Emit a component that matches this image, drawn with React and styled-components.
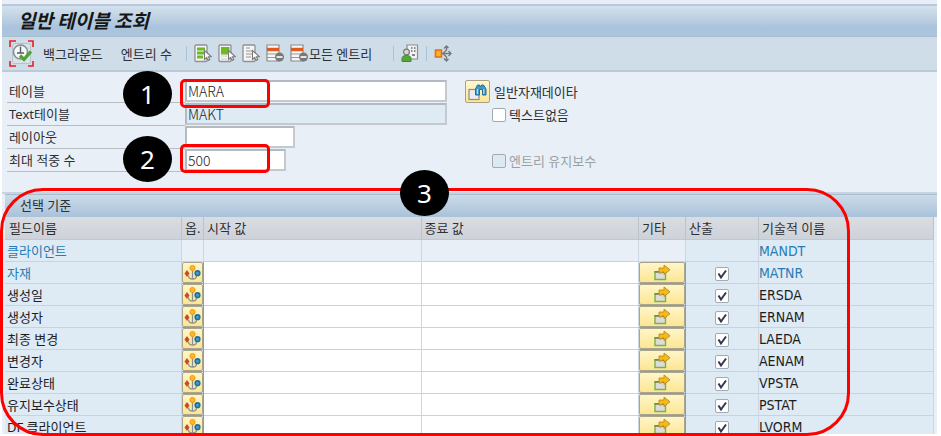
import React from "react";
import styled, { createGlobalStyle } from "styled-components";

const Global = createGlobalStyle`
  * { box-sizing: border-box; }
  body {
    margin: 0;
    min-height: 100vh;
    background: #fff;
    color: #2d2f33;
    font: 13px/20px "Noto Sans", "Noto Sans CJK KR", sans-serif;
  }
  button, input { font: inherit; color: inherit; }
`;

const Screen = styled.main`
  display: flex;
  flex-direction: column;
  height: calc(100vh - 2px);
  min-height: 400px;
  margin: 0 4px 0 2px;
  padding-top: 4px;
  background: #e8eff6;
`;

const TitleBar = styled.header`
  height: 33px;
  padding-left: 16px;
  border-top: 2px solid #bcc8da;
  border-bottom: 1px solid #a6bdd2;
  background: linear-gradient(#d2e1ee, #c1d3e2 35%, #abc4de 70%, #abc5dd);
`;

const Title = styled.h1`
  margin: 0;
  font: italic 700 19px/28px "Noto Sans CJK KR", sans-serif;
  color: #161616;
`;

const Toolbar = styled.div`
  display: flex;
  align-items: center;
  height: 35px;
  padding-left: 7px;
  background: #cfdde8;
  border-bottom: 2px solid #b9cad8;
`;

const ToolButton = styled.button`
  display: flex;
  align-items: center;
  height: 28px;
  padding: 0;
  margin-right: ${(p) => p.$after || 0}px;
  border: 0;
  background: none;
  white-space: nowrap;
`;

const Separator = styled.span`
  width: 1px;
  height: 15px;
  margin-right: 7px;
  background: #a9c3da;
`;

const Form = styled.form`
  display: flex;
  flex-direction: column;
  padding: 8px 0 20px 5px;
`;

const FormRow = styled.div`
  position: relative;
  display: grid;
  grid-template-columns: 178px 262px 1fr;
  height: 23px;
`;

const FieldLabel = styled.label`
  padding-left: 2px;
  line-height: 22px;
  border-bottom: 1px solid #b9bdc2;
`;

const TextField = styled.input`
  width: ${(p) => p.$width || "100%"};
  height: 22px;
  padding: 0 1px 1px;
  border: 2px solid #b3bac1;
  border-right-color: #c3c9cf;
  border-bottom-color: #c3c9cf;
  border-radius: 0;
  background: #fff;
  outline: 0;
  font: 300 14px/17px "Noto Sans CJK KR", sans-serif;
  color: #222;
  &:read-only { background: #deeaf4; }
`;

const Aside = styled.div`
  display: flex;
  align-items: center;
  gap: 4px;
  padding-left: ${(p) => (p.$indent ? 45 : 18)}px;
`;

const MatchButton = styled.button`
  display: grid;
  place-items: center;
  width: 25px;
  height: 23px;
  padding: 0;
  border: 1px solid #a8a388;
  border-radius: 2px;
  background: linear-gradient(#fff7cf, #fbe694);
`;

const CheckLabel = styled.label`
  display: flex;
  align-items: center;
  gap: 3px;
  color: ${(p) => (p.$muted ? "#9a9fa5" : "inherit")};
`;

const CheckWrap = styled.span`
  display: inline-grid;
  width: 14px;
  height: 14px;
  vertical-align: middle;
  & > * { grid-area: 1 / 1; }
  svg { pointer-events: none; opacity: 0; }
  input:checked + svg { opacity: 1; }
`;

const CheckInput = styled.input`
  appearance: none;
  width: 14px;
  height: 14px;
  margin: 0;
  border: 1px solid #a2aab2;
  border-radius: 2px;
  background: #fff;
  &:disabled { background: #dce8f2; }
`;

const Criteria = styled.section`
  position: relative;
  flex: 1;
  min-height: 0;
`;

const CriteriaClip = styled.div`
  height: 100%;
  padding-left: 3px;
  overflow: hidden;
  border-top: 2px solid #c5d4e1;
`;

const CriteriaTitle = styled.h2`
  height: 23px;
  margin: 0;
  padding-left: 15px;
  border-top: 1px solid #aabccd;
  background: linear-gradient(#cbdbe9, #a9c2da);
  font-size: 13px;
  line-height: 20px;
  font-weight: 400;
`;

const Table = styled.table`
  width: calc(100% - 3px);
  table-layout: fixed;
  border-collapse: separate;
  border-spacing: 0;
`;

const Col = styled.col`
  width: ${(p) => p.$width || "auto"};
`;

const HeadCell = styled.th`
  height: 23px;
  padding: 0 0 0 ${(p) => p.$pad || 3}px;
  border-right: 1px solid #bcc2ca;
  border-bottom: 1px solid #bfc7cf;
  background: linear-gradient(#dadee2, #cdd1d9);
  font-weight: 400;
  line-height: 20px;
  text-align: left;
  white-space: nowrap;
`;

const Cell = styled.td`
  height: 22px;
  padding: 0 0 0 ${(p) => p.$pad || 0}px;
  border-right: 1px solid #ccd6e1;
  border-bottom: 1px solid #c7d4e0;
  background: ${(p) => p.$fill || "#deeaf4"};
  line-height: 20px;
  white-space: nowrap;
  vertical-align: middle;
  text-align: ${(p) => p.$align || "left"};
  color: ${(p) => (p.$key ? "#267cb4" : "#1d1d1f")};
`;

const TechCell = styled(Cell)`
  font-family: "DejaVu Sans Condensed", "Noto Sans", sans-serif;
  font-size: 14px;
`;

const ButtonCell = styled(Cell)`
  border-color: #999a96;
`;

const CellInput = styled.input`
  display: block;
  width: 100%;
  height: 21px;
  padding: 0 3px;
  border: 0;
  outline: 0;
  background: transparent;
`;

const CellButton = styled.button`
  display: grid;
  place-items: center;
  width: 100%;
  height: 21px;
  padding: 0;
  border: 1px solid #aaa68e;
  border-radius: 2px;
  background: linear-gradient(#fff6c8, #fbe693);
`;

const Badge = styled.span`
  position: absolute;
  z-index: 2;
  left: ${(p) => p.$left}px;
  top: ${(p) => p.$top}px;
  width: 49px;
  height: 46px;
  border-radius: 50%;
  background: #000;
  color: #fff;
  font: 26px/46px "Noto Sans", sans-serif;
  text-align: center;
`;

const FieldOutline = styled.span`
  position: absolute;
  z-index: 1;
  left: 173px;
  top: ${(p) => p.$top}px;
  width: 90px;
  height: 29px;
  border: 3px solid #f00;
  border-radius: 5px;
  pointer-events: none;
`;

const TableOutline = styled.span`
  position: absolute;
  z-index: 1;
  inset: -4px 87px -2px -2px;
  border: 3px solid #f00;
  border-radius: 43px;
  pointer-events: none;
`;

const RunIcon = () => (
  <svg width="26" height="28" viewBox="0 0 26 28" fill="none">
    <rect x="3.5" y="3.5" width="18" height="20" rx="2" fill="#d9e2e9" stroke="#b4c2cc" />
    <path d="M1 7V1h6M19 1h5v6M1 21v5h6M19 26h5v-5" stroke="#e81e1e" strokeWidth="1.6" />
    <circle cx="11.5" cy="12" r="7" fill="#f7f8f8" stroke="#888f94" strokeWidth="1.6" />
    <path d="M11.5 6.5v6M8 13h7" stroke="#555c62" strokeWidth="1.4" />
    <path d="M11 15.5l4 4 7-8" stroke="#4ea331" strokeWidth="3.2" />
  </svg>
);

const Pointer = () => (
  <path d="M10.5 6.5v9l2.2-2 1.4 3 1.6-.8-1.3-2.9h3z" fill="#fff" stroke="#7b7b7b" strokeWidth="1.1" />
);

const PickIcon = ({ kind }) => (
  <svg width="18" height="19" viewBox="0 0 18 19" fill="none">
    <rect x="1" y="1" width="12" height="16.5" rx="1" fill="#f5f5f5" stroke="#8f9193" strokeWidth="1.3" />
    {kind === "all" && <path d="M3 5h8M3 9h8M3 13h6" stroke="#6cbb20" strokeWidth="3" />}
    {kind === "block" && (
      <>
        <path d="M3 3h8.5v7.5H3z" fill="#6cbb20" />
        <path d="M3 12h6M3 15h6" stroke="#ccc" />
      </>
    )}
    {kind === "none" && <path d="M4 4h4M4 7h7M4 10h6M4 13h5" stroke="#b5b7b9" strokeWidth="1.4" />}
    <Pointer />
  </svg>
);

const RemoveIcon = () => (
  <svg width="19" height="19" viewBox="0 0 19 19" fill="none">
    <path d="M1 1h12v16H1z" fill="#f6f6f6" stroke="#888b8e" strokeWidth="1.2" />
    <path d="M1 5.5h12" stroke="#df5a20" strokeWidth="3.4" />
    <path d="M1 10h11M1 13.5h8" stroke="#999" />
    <circle cx="13.5" cy="13" r="4.5" fill="#77797b" />
    <path d="M10.5 13h6" stroke="#fff" strokeWidth="1.6" />
  </svg>
);

const UserIcon = () => (
  <svg width="18" height="19" viewBox="0 0 18 19" fill="none">
    <path d="M6 1h10.5v14H6z" fill="#f2f2f2" stroke="#8b8d8f" strokeWidth="1.2" />
    <path d="M10 4h1.5M13 4h1.5M10 7h1.5M13 7h1.5M11 11h3" stroke="#666" strokeWidth="1.4" />
    <circle cx="5.5" cy="8" r="2.9" fill="#d8d8d8" stroke="#77797b" strokeWidth="1.2" />
    <path d="M1 17.5v-3q0-3 4.5-3t4.5 3v3z" fill="#54a832" stroke="#4a8435" />
  </svg>
);

const BranchIcon = () => (
  <svg width="19" height="19" viewBox="0 0 19 19" fill="none">
    <path d="M1.5 6h6v7h-6z" fill="#fbb616" stroke="#e56b1d" strokeWidth="1.6" />
    <path
      d="M8 9.5h9M14.5 7l2.5 2.5-2.5 2.5M9 9.5l3.500-3.500V2.500M9 9.500l3.500 3.500v3.500M10 4.500l2.500-2.500 2 2M10 14.500l2.500 2.500 2-2"
      stroke="#77797b"
      strokeWidth="1.4"
    />
  </svg>
);

const BinocularsIcon = () => (
  <svg width="19" height="18" viewBox="0 0 19 18" fill="none">
    <rect x="1" y="6.5" width="10" height="10" fill="#ececec" stroke="#8b8d8f" strokeWidth="1.2" />
    <path d="M7.5 12V6l2-4h2l1 2 1-2h2l2.5 4v6h-3.5V6.5h-3V12z" fill="#3f9aca" stroke="#226d9a" />
    <path d="M9.5 6v5M15.8 6v5" stroke="#b6dff4" strokeWidth="1.2" />
  </svg>
);

const OptionsIcon = () => (
  <svg width="17" height="17" viewBox="0 0 17 17" fill="none">
    <path d="M8.5 6v9M4.5 11.5q0 3.5 4 3.5t4-3" stroke="#8c9095" strokeWidth="1.3" />
    <circle cx="8.5" cy="4" r="2.6" fill="#fbb829" stroke="#f59b16" />
    <path d="M3 6l2.500 3.500L3 13 .5 9.500z" fill="#c84a25" />
    <circle cx="13.5" cy="9.2" r="2.3" fill="#4a9fc5" stroke="#1c6f9b" strokeWidth="1.6" />
  </svg>
);

const MoreIcon = () => (
  <svg width="18" height="17" viewBox="0 0 18 17" fill="none">
    <path d="M2 8h10.5v7.5H2z" fill="#dcdcdc" stroke="#78b53a" strokeWidth="1.4" />
    <path d="M1.5 7.8H13" stroke="#777" strokeWidth="1.4" />
    <path d="M6 9V4h5V1l6 4.8-6 4.7V8H9v1z" fill="#f9b914" stroke="#a8832c" strokeWidth=".8" />
  </svg>
);

const CheckMark = () => (
  <svg width="14" height="14" viewBox="0 0 14 14" fill="none">
    <path d="M3.5 6.5L6 10.5l5-7" stroke="#343650" strokeWidth="2" />
  </svg>
);

const Check = (props) => (
  <CheckWrap>
    <CheckInput type="checkbox" {...props} />
    <CheckMark />
  </CheckWrap>
);

const rows = [
  { name: "클라이언트", tech: "MANDT", key: true, locked: true },
  { name: "자재", tech: "MATNR", key: true },
  { name: "생성일", tech: "ERSDA" },
  { name: "생성자", tech: "ERNAM" },
  { name: "최종 변경", tech: "LAEDA" },
  { name: "변경자", tech: "AENAM" },
  { name: "완료상태", tech: "VPSTA" },
  { name: "유지보수상태", tech: "PSTAT" },
  { name: "DF 클라이언트", tech: "LVORM" },
];

const LOCKED = "#e8eff6";

const CriteriaRow = ({ row }) => (
  <tr>
    <Cell $pad={2} $key={row.key}>{row.name}</Cell>
    {row.locked ? (
      <>
        <Cell $fill={LOCKED} />
        <Cell $fill={LOCKED} />
        <Cell $fill={LOCKED} />
        <Cell $fill={LOCKED} />
        <Cell />
      </>
    ) : (
      <>
        <ButtonCell>
          <CellButton type="button" aria-label={`${row.name} 옵션`}><OptionsIcon /></CellButton>
        </ButtonCell>
        <Cell $fill="#fff"><CellInput aria-label={`${row.name} 시작 값`} /></Cell>
        <Cell $fill="#fff"><CellInput aria-label={`${row.name} 종료 값`} /></Cell>
        <ButtonCell>
          <CellButton type="button" aria-label={`${row.name} 기타`}><MoreIcon /></CellButton>
        </ButtonCell>
        <Cell $align="center"><Check defaultChecked aria-label={`${row.name} 산출`} /></Cell>
      </>
    )}
    <TechCell $key={row.key}>{row.tech}</TechCell>
  </tr>
);

export default function App() {
  return (
    <>
      <Global />
      <Screen>
        <TitleBar><Title>일반 테이블 조회</Title></TitleBar>
        <Toolbar>
          <ToolButton $after={8} aria-label="실행"><RunIcon /></ToolButton>
          <ToolButton $after={18}>백그라운드</ToolButton>
          <ToolButton $after={14}>엔트리 수</ToolButton>
          <Separator />
          <ToolButton $after={6} aria-label="모두 선택"><PickIcon kind="all" /></ToolButton>
          <ToolButton $after={6} aria-label="블록 선택"><PickIcon kind="block" /></ToolButton>
          <ToolButton $after={6} aria-label="선택 해제"><PickIcon kind="none" /></ToolButton>
          <ToolButton $after={5} aria-label="엔트리 삭제"><RemoveIcon /></ToolButton>
          <ToolButton $after={21}><RemoveIcon />모든 엔트리</ToolButton>
          <Separator />
          <ToolButton $after={7} aria-label="사용자"><UserIcon /></ToolButton>
          <Separator />
          <ToolButton aria-label="분기"><BranchIcon /></ToolButton>
        </Toolbar>

        <Form onSubmit={(e) => e.preventDefault()}>
          <FormRow>
            <FieldLabel htmlFor="table">테이블</FieldLabel>
            <TextField id="table" defaultValue="MARA" />
            <Aside>
              <MatchButton type="button" aria-label="검색"><BinocularsIcon /></MatchButton>
              <span>일반자재데이타</span>
            </Aside>
            <FieldOutline $top={-1} />
            <Badge $left={116} $top={-9}>1</Badge>
          </FormRow>
          <FormRow>
            <FieldLabel htmlFor="text-table">Text테이블</FieldLabel>
            <TextField id="text-table" defaultValue="MAKT" readOnly />
            <Aside $indent>
              <CheckLabel><Check />텍스트없음</CheckLabel>
            </Aside>
          </FormRow>
          <FormRow>
            <FieldLabel htmlFor="layout">레이아웃</FieldLabel>
            <TextField id="layout" $width="110px" />
          </FormRow>
          <FormRow>
            <FieldLabel htmlFor="max-hits">최대 적중 수</FieldLabel>
            <TextField id="max-hits" defaultValue="500" $width="101px" />
            <Aside $indent>
              <CheckLabel $muted><Check disabled />엔트리 유지보수</CheckLabel>
            </Aside>
            <FieldOutline $top={-5} />
            <Badge $left={116} $top={-13}>2</Badge>
          </FormRow>
        </Form>

        <Criteria>
          <CriteriaClip>
            <CriteriaTitle>선택 기준</CriteriaTitle>
            <Table>
              <colgroup>
                <Col $width="177px" />
                <Col $width="22px" />
                <Col />
                <Col />
                <Col $width="47px" />
                <Col $width="73px" />
                <Col $width="175px" />
              </colgroup>
              <thead>
                <tr>
                  <HeadCell $pad={4}>필드이름</HeadCell>
                  <HeadCell>옵.</HeadCell>
                  <HeadCell>시작 값</HeadCell>
                  <HeadCell>종료 값</HeadCell>
                  <HeadCell>기타</HeadCell>
                  <HeadCell>산출</HeadCell>
                  <HeadCell>기술적 이름</HeadCell>
                </tr>
              </thead>
              <tbody>
                {rows.map((row) => <CriteriaRow key={row.tech} row={row} />)}
              </tbody>
            </Table>
          </CriteriaClip>
          <TableOutline />
          <Badge $left={398} $top={-22}>3</Badge>
        </Criteria>
      </Screen>
    </>
  );
}
